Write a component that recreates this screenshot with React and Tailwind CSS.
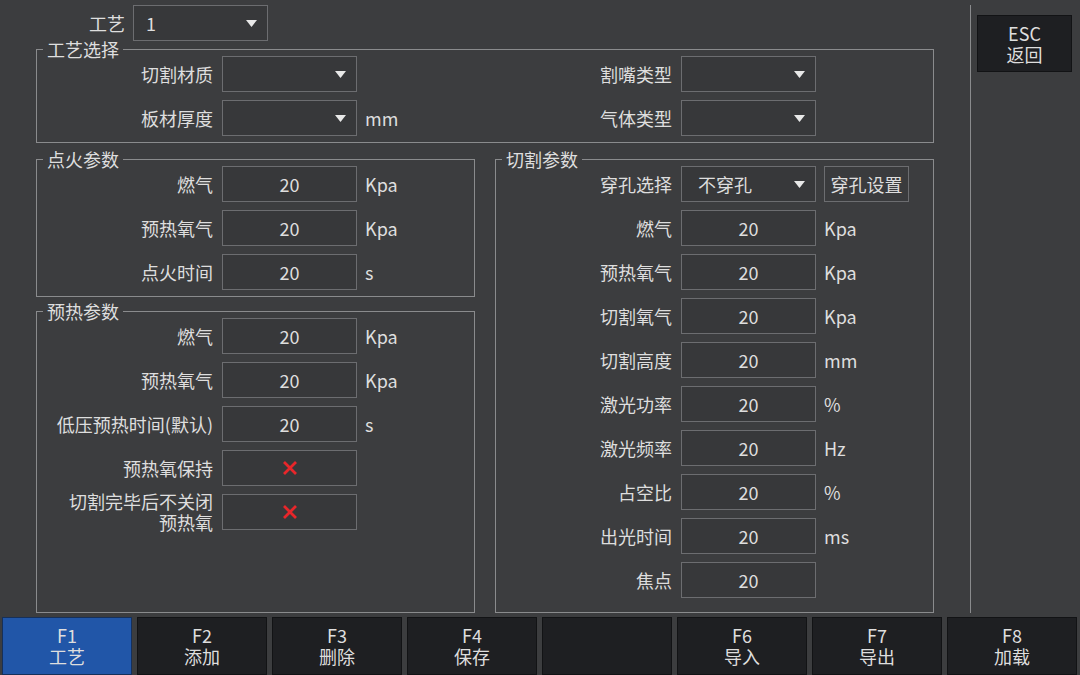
import React from 'react';

const Arrow = () => (
  <svg width="11" height="7" viewBox="0 0 11 7" className="shrink-0">
    <polygon points="0,0 11,0 5.5,7" fill="#e8e8e8" />
  </svg>
);

const Cross = () => (
  <svg width="16" height="16" viewBox="0 0 16 16">
    <path d="M2 2 L14 14 M14 2 L2 14" stroke="#e8262a" strokeWidth="2.8" />
  </svg>
);

const Select = ({ value, className = '' }) => (
  <div className={`w-[135px] h-[36px] border border-[#6c6d70] bg-[#37383a] flex items-center justify-between pl-[12px] pr-[10px] ${className}`}>
    <span>{value}</span>
    <Arrow />
  </div>
);

const Row = ({ label, children, unit }) => (
  <div className="flex items-center h-[36px]">
    <div className="w-[176px] text-right leading-[21px] whitespace-pre-line">{label}</div>
    <div className="ml-[9px] flex items-center">{children}</div>
    {unit && <span className="ml-[8px]">{unit}</span>}
  </div>
);

const Value = ({ children }) => (
  <div className="w-[135px] h-[36px] border border-[#6c6d70] bg-[#37383a] flex items-center justify-center">
    {children}
  </div>
);

const Group = ({ title, children, className = '' }) => (
  <fieldset className={`border border-[#8a8b8d] px-0 pb-[6px] pt-0 m-0 min-w-0 ${className}`}>
    <legend className="ml-[6px] px-[4px] leading-[14px] h-[14px]">{title}</legend>
    <div className="flex flex-col gap-[8px]">{children}</div>
  </fieldset>
);

const keys = [
  ['F1', '工艺', true],
  ['F2', '添加'],
  ['F3', '删除'],
  ['F4', '保存'],
  ['', ''],
  ['F6', '导入'],
  ['F7', '导出'],
  ['F8', '加载'],
];

export default function App() {
  return (
    <div
      className="w-[1080px] h-[675px] bg-[#3c3d3f] text-[#dedede] text-[18px] flex flex-col overflow-hidden"
      style={{ fontFamily: '"Noto Sans CJK SC", "Noto Sans", sans-serif' }}
    >
      <div className="flex h-[613px]">
        <div className="w-[970px] pl-[36px] pr-[36px] pt-[5px] flex flex-col">
          <div className="flex items-center h-[36px]">
            <div className="w-[89px] text-right">工艺</div>
            <Select value="1" className="ml-[8px]" />
          </div>

          <Group title="工艺选择" className="mt-[1px]">
            <div className="flex">
              <div className="w-[459px]">
                <Row label="切割材质"><Select value="" /></Row>
              </div>
              <Row label="割嘴类型"><Select value="" /></Row>
            </div>
            <div className="flex">
              <div className="w-[459px]">
                <Row label="板材厚度" unit="mm"><Select value="" /></Row>
              </div>
              <Row label="气体类型"><Select value="" /></Row>
            </div>
          </Group>

          <div className="flex flex-1 gap-[20px] mt-[9px]">
            <div className="w-[439px] flex flex-col">
              <Group title="点火参数">
                <Row label="燃气" unit="Kpa"><Value>20</Value></Row>
                <Row label="预热氧气" unit="Kpa"><Value>20</Value></Row>
                <Row label="点火时间" unit="s"><Value>20</Value></Row>
              </Group>
              <Group title="预热参数" className="mt-[7px] flex-1">
                <Row label="燃气" unit="Kpa"><Value>20</Value></Row>
                <Row label="预热氧气" unit="Kpa"><Value>20</Value></Row>
                <Row label="低压预热时间(默认)" unit="s"><Value>20</Value></Row>
                <Row label="预热氧保持"><Value><Cross /></Value></Row>
                <Row label={'切割完毕后不关闭\n预热氧'}><Value><Cross /></Value></Row>
              </Group>
            </div>
            <Group title="切割参数" className="w-[439px]">
              <div className="flex items-center h-[36px]">
                <div className="w-[176px] text-right">穿孔选择</div>
                <div className="ml-[9px] w-[135px] h-[36px] border border-[#6c6d70] bg-[#37383a] flex items-center justify-between pl-[16px] pr-[10px]">
                  <span>不穿孔</span>
                  <Arrow />
                </div>
                <div className="ml-[8px] w-[85px] h-[36px] border border-[#6c6d70] bg-[#3a3b3d] flex items-center justify-center">
                  穿孔设置
                </div>
              </div>
              <Row label="燃气" unit="Kpa"><Value>20</Value></Row>
              <Row label="预热氧气" unit="Kpa"><Value>20</Value></Row>
              <Row label="切割氧气" unit="Kpa"><Value>20</Value></Row>
              <Row label="切割高度" unit="mm"><Value>20</Value></Row>
              <Row label="激光功率" unit="%"><Value>20</Value></Row>
              <Row label="激光频率" unit="Hz"><Value>20</Value></Row>
              <Row label="占空比" unit="%"><Value>20</Value></Row>
              <Row label="出光时间" unit="ms"><Value>20</Value></Row>
              <Row label="焦点"><Value>20</Value></Row>
            </Group>
          </div>
        </div>

        <div className="w-px bg-[#8a8b8d] mt-[5px]" />

        <div className="ml-[6px] mt-[15px]">
          <div className="w-[95px] h-[57px] bg-[#1e1f22] border border-[#121315] flex flex-col items-center justify-center leading-[21px]">
            <span>ESC</span>
            <span>返回</span>
          </div>
        </div>
      </div>

      <div className="flex gap-[5px] pl-[2px] pt-[4px] h-[62px]">
        {keys.map(([k, label, active], i) => (
          <div
            key={i}
            className={`w-[130px] h-[58px] border flex flex-col items-center justify-center leading-[21px] ${
              active ? 'bg-[#2156a8] border-[#16305a]' : 'bg-[#1e1f22] border-[#121315]'
            }`}
          >
            <span>{k}</span>
            <span>{label}</span>
          </div>
        ))}
      </div>
    </div>
  );
}
